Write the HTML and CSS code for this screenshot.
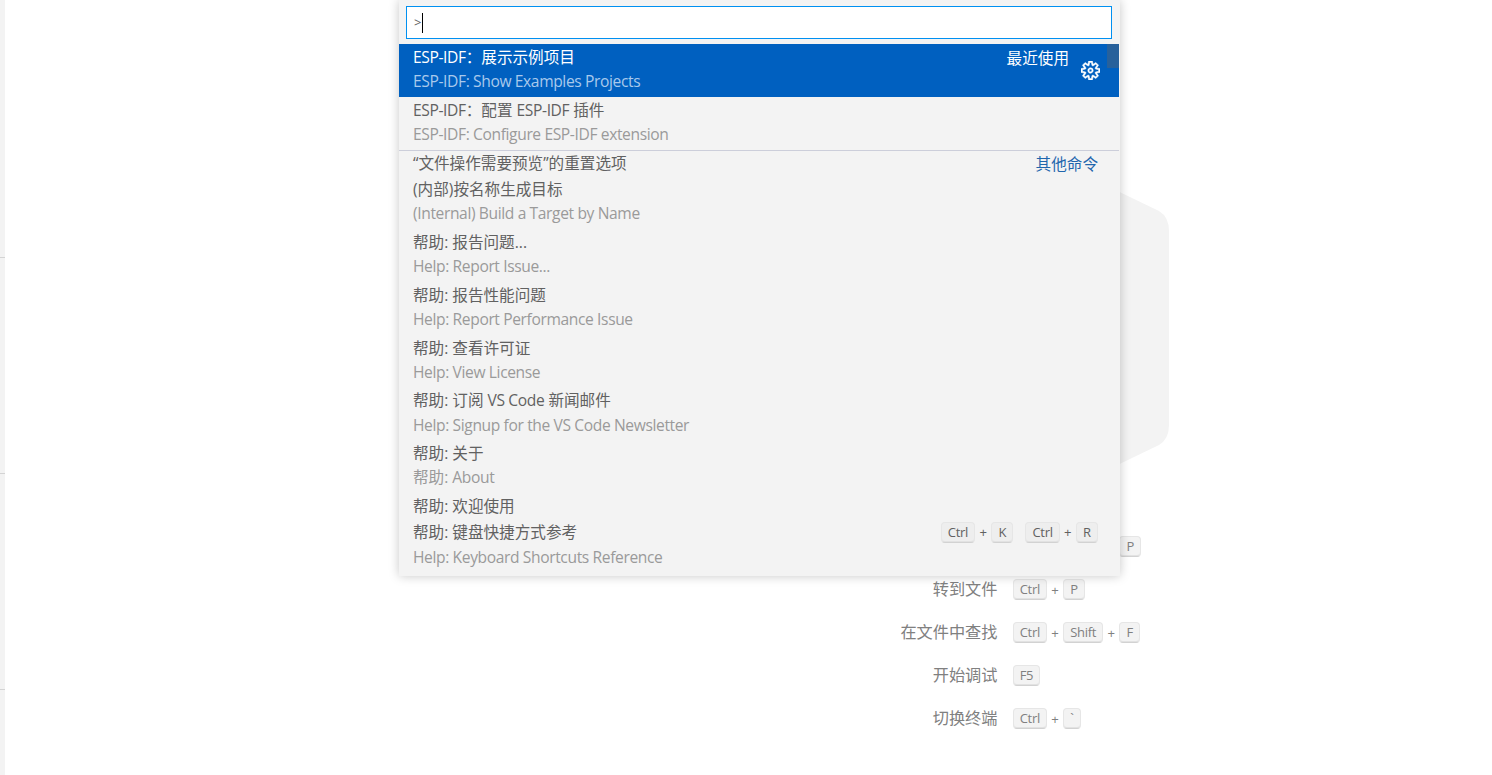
FILE: index.html
```html
<!DOCTYPE html>
<html lang="zh-CN">
<head>
<meta charset="utf-8">
<title>Command Palette</title>
<link rel="stylesheet" href="styles.css">
</head>
<body>
<div class="workbench">
  <aside class="strip">
    <div class="strip-cell"></div>
    <div class="strip-cell"></div>
    <div class="strip-cell"></div>
  </aside>
  <div class="side-gap"></div>
  <main class="editor">
    <svg class="letterpress" viewBox="0 0 330 378" width="330" height="378" aria-hidden="true">
      <path class="hex" d="M150 5 Q165 -2 180 5 L319 72 Q329 78 329 92 L329 286 Q329 300 319 306 L180 373 Q165 380 150 373 L11 306 Q1 300 1 286 L1 92 Q1 78 11 72 Z"/>
    </svg>
    <div class="shortcuts">
      <div class="sc-label">显示所有命令</div>
      <div class="sc-keys"><kbd>Ctrl</kbd><i>+</i><kbd>Shift</kbd><i>+</i><kbd>P</kbd></div>
      <div class="sc-label">转到文件</div>
      <div class="sc-keys"><kbd>Ctrl</kbd><i>+</i><kbd>P</kbd></div>
      <div class="sc-label">在文件中查找</div>
      <div class="sc-keys"><kbd>Ctrl</kbd><i>+</i><kbd>Shift</kbd><i>+</i><kbd>F</kbd></div>
      <div class="sc-label">开始调试</div>
      <div class="sc-keys"><kbd>F5</kbd></div>
      <div class="sc-label">切换终端</div>
      <div class="sc-keys"><kbd>Ctrl</kbd><i>+</i><kbd>`</kbd></div>
    </div>
  </main>
</div>

<section class="palette">
  <div class="input-box"><span class="prompt">&gt;</span><span class="caret"></span></div>
  <div class="list">
    <div class="scroll-thumb"></div>

    <div class="row row-2 selected">
      <div class="line">
        <span class="title"><span class="la">ESP-IDF</span>：展示示例项目</span>
        <span class="group">最近使用</span>
      </div>
      <div class="sub la">ESP-IDF: Show Examples Projects</div>
      <svg class="gear" viewBox="0 0 24 24" width="19" height="19" aria-hidden="true"><path fill-rule="evenodd" d="M19.85 8.75l4.15.83v4.84l-4.15.83 2.35 3.52-3.43 3.43-3.52-2.35-.83 4.15H9.58l-.83-4.15-3.52 2.35-3.43-3.43 2.35-3.52L0 14.42V9.58l4.15-.83L1.8 5.23 5.23 1.8l3.52 2.35L9.58 0h4.84l.83 4.15 3.52-2.35 3.43 3.43-2.35 3.52zm-1.57 5.07l4-.81v-2l-4-.81-.54-1.3 2.29-3.43-1.43-1.43-3.43 2.29-1.3-.54-.81-4h-2l-.81 4-1.3.54-3.43-2.29-1.43 1.43L6.38 8.9l-.54 1.3-4 .81v2l4 .81.54 1.3-2.29 3.43 1.43 1.43 3.43-2.29 1.3.54.81 4h2l.81-4 1.3-.54 3.43 2.29 1.43-1.43-2.29-3.43.54-1.3zm-8.186-4.672A3.43 3.43 0 0 1 12 8.57 3.44 3.44 0 0 1 15.43 12a3.43 3.43 0 1 1-5.336-2.852zm.956 4.274c.281.188.612.288.95.288A1.7 1.7 0 0 0 13.71 12a1.71 1.71 0 1 0-2.66 1.422z"/></svg>
    </div>

    <div class="row row-2">
      <div class="line"><span class="title"><span class="la">ESP-IDF</span>：配置 <span class="la">ESP-IDF</span> 插件</span></div>
      <div class="sub la">ESP-IDF: Configure ESP-IDF extension</div>
    </div>

    <div class="row row-1 sep">
      <div class="line">
        <span class="title">“文件操作需要预览”的重置选项</span>
        <span class="group link">其他命令</span>
      </div>
    </div>

    <div class="row row-2">
      <div class="line"><span class="title">(内部)按名称生成目标</span></div>
      <div class="sub la">(Internal) Build a Target by Name</div>
    </div>
    <div class="row row-2">
      <div class="line"><span class="title">帮助: 报告问题...</span></div>
      <div class="sub la">Help: Report Issue...</div>
    </div>
    <div class="row row-2">
      <div class="line"><span class="title">帮助: 报告性能问题</span></div>
      <div class="sub la">Help: Report Performance Issue</div>
    </div>
    <div class="row row-2">
      <div class="line"><span class="title">帮助: 查看许可证</span></div>
      <div class="sub la">Help: View License</div>
    </div>
    <div class="row row-2">
      <div class="line"><span class="title">帮助: 订阅 <span class="la">VS Code</span> 新闻邮件</span></div>
      <div class="sub la">Help: Signup for the VS Code Newsletter</div>
    </div>
    <div class="row row-2">
      <div class="line"><span class="title">帮助: 关于</span></div>
      <div class="sub">帮助: <span class="la">About</span></div>
    </div>
    <div class="row row-1">
      <div class="line"><span class="title">帮助: 欢迎使用</span></div>
    </div>
    <div class="row row-2">
      <div class="line">
        <span class="title">帮助: 键盘快捷方式参考</span>
        <span class="keys"><kbd>Ctrl</kbd><i>+</i><kbd>K</kbd><b class="chord"></b><kbd>Ctrl</kbd><i>+</i><kbd>R</kbd></span>
      </div>
      <div class="sub la">Help: Keyboard Shortcuts Reference</div>
    </div>
  </div>
</section>
</body>
</html>
```

FILE: styles.css
```css
* { box-sizing: border-box; }
html, body { margin: 0; height: 100%; overflow: hidden; background: #fff; }
body {
  font-family: "Open Sans", "Noto Sans CJK SC", sans-serif;
  font-size: 15.6px;
  color: #616161;
}
.workbench { display: flex; height: 775px; }
.strip { width: 5px; background: #f3f3f3; padding-top: 42px; }
.strip-cell { height: 216px; border-bottom: 1px solid #d4d4d4; }
.side-gap { width: 513px; }
.editor { flex: 1; display: flex; flex-direction: column; align-items: center; padding-top: 139px; }
.letterpress { flex: none; display: block; }
.hex { fill: #f3f3f3; }
.shortcuts {
  width: 100%;
  margin-top: 8px;
  display: grid;
  grid-template-columns: 1fr 1fr;
  grid-auto-rows: 43px;
  column-gap: 15px;
  align-items: center;
  color: #808080;
}
.sc-label { text-align: right; font-size: 16.2px; line-height: 40px; padding-bottom: 1px; }
.sc-keys { display: flex; align-items: center; }
.sc-keys i, .keys i { font-style: normal; width: 16px; text-align: center; font-size: 13.2px; }
kbd {
  display: inline-block;
  height: 21px;
  line-height: 18px;
  padding: 0 6.2px;
  font-family: "Open Sans", sans-serif;
  font-size: 13px;
  letter-spacing: -0.3px;
  color: #808080;
  background: #f3f3f3;
  border: 1px solid #e6e6e6;
  border-bottom-color: #d2d2d2;
  border-radius: 4px;
  box-shadow: inset 0 -1px 0 #e2e2e2;
}
.palette {
  position: absolute;
  left: 399px;
  top: 0;
  width: 721px;
  height: 576px;
  padding-top: 6px;
  background: #f3f3f3;
  box-shadow: 0 0 10px rgba(0, 0, 0, .22);
}
.input-box {
  display: flex;
  align-items: center;
  height: 33px;
  margin: 0 8px 5px 7px;
  padding-left: 7px;
  background: #fff;
  border: 1px solid #0090f1;
}
.prompt { font-size: 13px; line-height: 1; }
.caret { width: 1px; height: 20px; background: #000; margin-left: 1px; }
.list { position: relative; margin-right: 1px; }
.scroll-thumb {
  position: absolute; right: 0; top: 0; z-index: 2;
  width: 12px; height: 24px;
  background: rgba(100, 100, 100, .4);
}
.row { position: relative; padding: 0 21px 0 14px; }
.row-2 { height: 52.8px; }
.row-1 { height: 26.4px; }
.line {
  display: flex;
  justify-content: space-between;
  align-items: center;
  height: 26.4px;
  white-space: nowrap;
}
.title { line-height: 26px; }
.sub { color: #9a9a9a; height: 26.4px; line-height: 22px; white-space: nowrap; }
.la { letter-spacing: -0.38px; }
.group { line-height: 24px; padding-top: 2px; }
.link { color: #1f66ad; }
.sep::before {
  content: "";
  position: absolute; left: 0; right: 0; top: 0;
  height: 1px; background: #ccceda;
}
.keys { display: flex; align-items: center; }
.keys kbd { color: #616161; background: #eeeeee; }
.chord { width: 12px; }
.selected { background: #0060c0; color: #fff; padding-right: 50px; }
.selected .sub { color: #a9c9ec; }
.gear { position: absolute; right: 19px; top: 17px; fill: #fff; stroke: #fff; stroke-width: .6; }
```
